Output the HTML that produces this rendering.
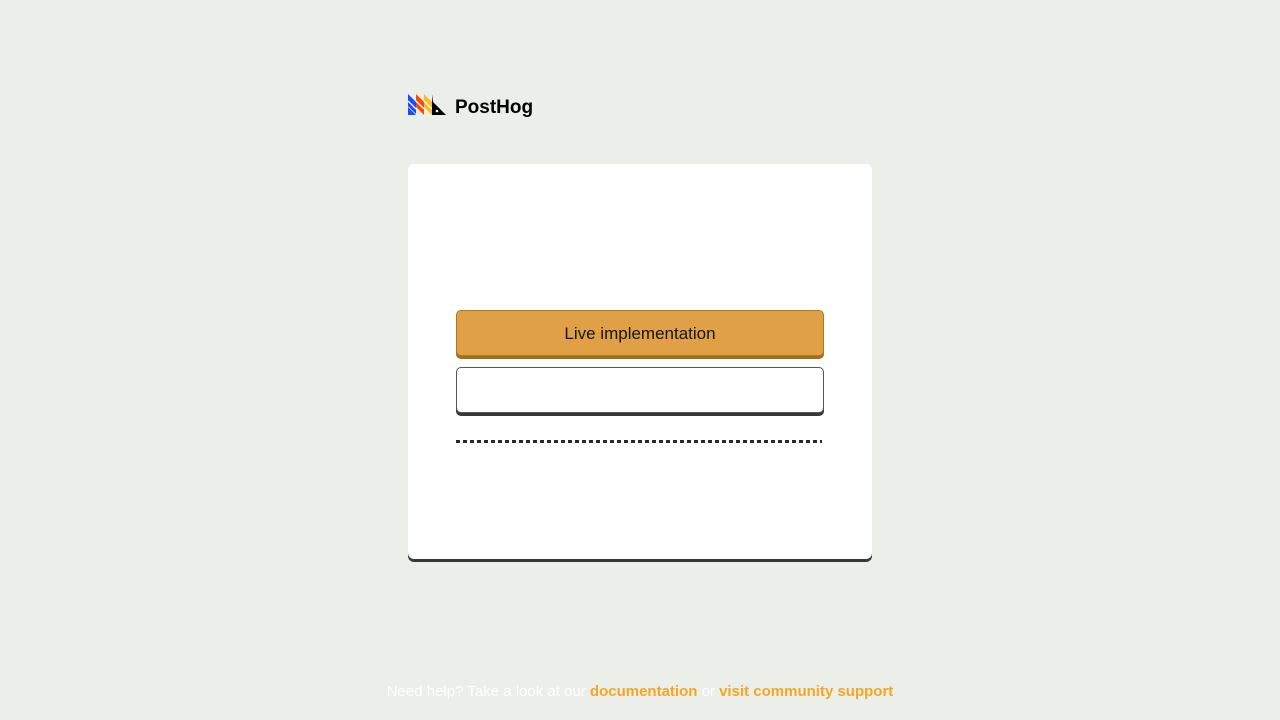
<!DOCTYPE html>
<html><head><style>
html,body{margin:0;padding:0;width:1280px;height:720px;background:#eceee9;font-family:"Liberation Sans",sans-serif;position:relative;overflow:hidden}
.logo{position:absolute;left:408px;top:92px}
.card{position:absolute;left:408px;top:164px;width:464px;height:395px;background:#fff;border-radius:6px;box-shadow:0 3px 0 #35373a}
.btn1{position:absolute;left:456px;top:310px;width:366px;height:44px;background:#e0a045;border:1px solid #b07a1c;border-radius:5px;box-shadow:0 3px 0 #a06f18;text-align:center;line-height:46px;font-size:17px;color:#151515}
.btn2{position:absolute;left:456px;top:367px;width:366px;height:44px;background:#fff;border:1px solid #555;border-radius:5px;box-shadow:0 3px 0 #35373a}
.dash{position:absolute;left:456px;top:440px;width:366px;height:3px;background:repeating-linear-gradient(90deg,#2a2a2a 0 4px,transparent 4px 7px)}
.foot{position:absolute;left:0;width:1280px;top:683px;text-align:center;font-size:15px;color:#fff}
.foot b{color:#f5a623;font-weight:bold}
</style></head><body>
<svg class="logo" width="130" height="26" viewBox="0 0 130 26">
<polygon points="0,2 0,23 8,23 8,10" fill="#1d4aff"/>
<polygon points="8,2 8,15 16,23 16,10" fill="#f54e00"/>
<polygon points="16,2 16,15 24,23 24,10" fill="#f9bd2b"/>
<g stroke="#fff" stroke-width="1.3"><line x1="0" y1="9" x2="8" y2="17"/><line x1="0" y1="15" x2="8" y2="23"/><line x1="8" y1="9" x2="16" y2="17"/><line x1="16" y1="9" x2="24" y2="17"/></g>
<polygon points="0,23 8,23 0,15" fill="#1d4aff"/>
<polygon points="24,2 24,23 38,23 25,10" fill="#000"/>
<polygon points="25,12 25,23 38,23" fill="#000"/>
<circle cx="29" cy="19" r="1.3" fill="#fff"/>
<text x="47" y="21" font-family="Liberation Sans" font-weight="bold" font-size="19" fill="#000">PostHog</text>
</svg>
<div class="card"></div>
<div class="btn1">Live implementation</div>
<div class="btn2"></div>
<div class="dash"></div>
<div class="foot">Need help? Take a look at our <b>documentation</b> or <b>visit community support</b></div>
</body></html>
